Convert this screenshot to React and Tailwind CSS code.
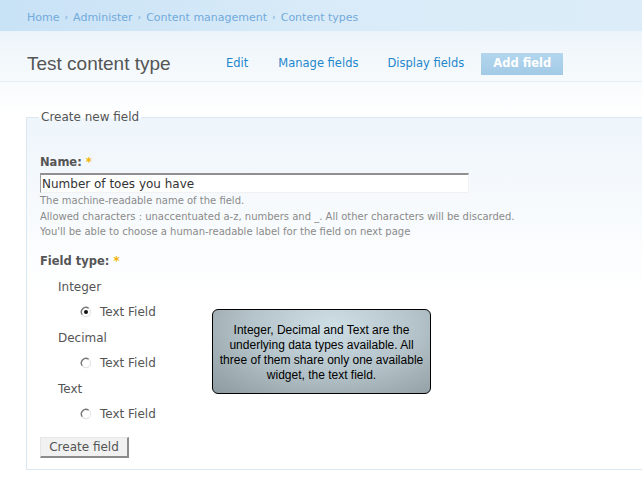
import React from 'react';

const font = { fontFamily: '"DejaVu Sans", Verdana, sans-serif' };

function Radio({ checked }) {
  return (
    <svg width="12" height="12" viewBox="0 0 12 12" className="shrink-0">
      <circle cx="6" cy="6" r="4.6" fill="#fff" stroke="#e4e4e4" strokeWidth="1.2" />
      <path d="M2.2 8.6 A4.6 4.6 0 0 1 8.6 2.2" fill="none" stroke="#777" strokeWidth="1.4" />
      {checked && <circle cx="6" cy="6" r="2" fill="#111" />}
    </svg>
  );
}

function Option({ label, checked }) {
  return (
    <div>
      <div className="pl-[18px] h-[26px] flex items-center text-[12px] text-[#555]">{label}</div>
      <div className="pl-[40px] h-[25px] flex items-center gap-[8px] text-[12px] text-[#555]">
        <Radio checked={checked} />
        <span>Text Field</span>
      </div>
    </div>
  );
}

export default function App() {
  return (
    <div className="w-[642px] h-[482px] overflow-hidden bg-white relative" style={font}>
      <div className="h-[32px] flex items-center pl-[27px] pt-[5px] text-[11px] text-[#72aadb] bg-gradient-to-r from-[#c8e2f6] via-[#d9ebf8] to-[#dcedf9] border-b border-[#eaf3fa]">
        Home <span className="mx-[5px] text-[9px]">›</span> Administer <span className="mx-[5px] text-[9px]">›</span> Content management <span className="mx-[5px] text-[9px]">›</span> Content types
      </div>
      <div className="h-[50px] flex items-end pb-[6px] pl-[27px] bg-gradient-to-b from-[#eef5fa] to-[#f6fafd] border-b border-[#e6eef5]">
        <h1 className="text-[19px] leading-[22px] text-[#555] w-[199px]" style={{ fontFamily: '"Liberation Sans", Arial, sans-serif' }}>
          Test content type
        </h1>
        <nav className="flex items-center text-[11.5px] text-[#1f87cc]">
          <span className="mr-[30px]">Edit</span>
          <span className="mr-[29px]">Manage fields</span>
          <span className="mr-[17px]">Display fields</span>
          <span className="w-[82px] h-[22px] flex items-center justify-center font-bold text-white bg-gradient-to-b from-[#b3d6ee] to-[#a2cae6]">Add field</span>
        </nav>
      </div>
      <div className="h-[35px] bg-gradient-to-b from-[#f8fbfd] to-white" />
      <fieldset className="ml-[26px] border border-r-0 border-[#dbe7f1] h-[360px] bg-gradient-to-b from-[#eef5fb] via-white to-white pl-[13px] mt-[-7px]">
        <legend className="text-[12px] text-[#555] px-[2px] ml-[-1px] leading-[14px]">Create new field</legend>
        <div className="pt-[31px]">
          <div className="text-[11.5px] font-bold text-[#555] leading-[14px]">
            Name: <span className="text-[#f0b400]">*</span>
          </div>
          <div className="mt-[4px] w-[429px] h-[20px] border-t-2 border-l border-t-[#8f8f8f] border-l-[#a0a0a0] border-r border-b border-r-[#f2f2f2] border-b-[#f2f2f2] bg-white flex items-center pl-[1px] text-[12px] text-[#333]">
            Number of toes you have
          </div>
          <div className="text-[10px] text-[#8a8a8a] leading-[15.5px] mt-[0px]">
            <div>The machine-readable name of the field.</div>
            <div>Allowed characters : unaccentuated a-z, numbers and _. All other characters will be discarded.</div>
            <div>You'll be able to choose a human-readable label for the field on next page</div>
          </div>
          <div className="mt-[14px] text-[11.5px] font-bold text-[#555] leading-[14px]">
            Field type: <span className="text-[#f0b400]">*</span>
          </div>
          <div className="mt-[6px]">
            <Option label="Integer" checked />
            <Option label="Decimal" />
            <Option label="Text" />
          </div>
          <button className="mt-[10px] w-[89px] h-[21px] text-[12px] text-[#555] bg-[#f1f1f1] border border-t-[#e6e6e6] border-l-[#e6e6e6] border-r-2 border-b-2 border-r-[#8c8c8c] border-b-[#8c8c8c]" style={font}>
            Create field
          </button>
        </div>
      </fieldset>
      <div
        className="absolute left-[212px] top-[309px] w-[219px] h-[85px] rounded-[6px] border border-black flex items-center justify-center text-center text-[12px] leading-[15px] text-black px-[4px] pt-[2px]"
        style={{
          fontFamily: '"Liberation Sans", Arial, sans-serif',
          background: 'radial-gradient(ellipse at 55% 20%, #cfdfe6 0%, #b4c3c9 50%, #8d9a9f 100%)',
        }}
      >
        Integer, Decimal and Text are the underlying data types available. All three of them share only one available widget, the text field.
      </div>
    </div>
  );
}
